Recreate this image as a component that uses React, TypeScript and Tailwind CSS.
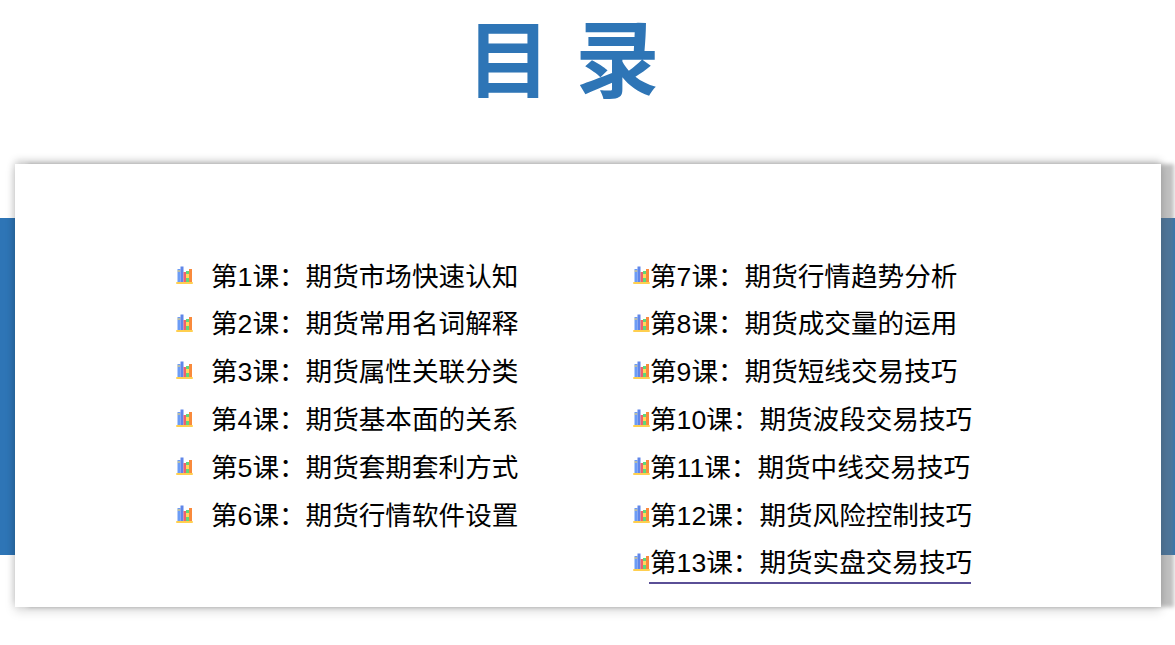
const FONT = "font-['Liberation_Sans','Noto_Sans_CJK_SC',sans-serif]";

const left = [
  ['第1课：', '期货市场快速认知'],
  ['第2课：', '期货常用名词解释'],
  ['第3课：', '期货属性关联分类'],
  ['第4课：', '期货基本面的关系'],
  ['第5课：', '期货套期套利方式'],
  ['第6课：', '期货行情软件设置'],
];

const right = [
  ['第7课：', '期货行情趋势分析'],
  ['第8课：', '期货成交量的运用'],
  ['第9课：', '期货短线交易技巧'],
  ['第10课：', '期货波段交易技巧'],
  ['第11课：', '期货中线交易技巧'],
  ['第12课：', '期货风险控制技巧'],
  ['第13课：', '期货实盘交易技巧'],
];

const BooksIcon = () => (
  <svg width="17" height="19" viewBox="0 0 17 19" className="-mt-[3px] shrink-0">
    <rect x="1.5" y="3" width="3" height="13" fill="#6c9cf5" />
    <rect x="1.5" y="4.5" width="3" height="1" fill="#ffd95c" />
    <rect x="4.5" y="0.5" width="3" height="15.5" fill="#5f86ea" />
    <rect x="7.5" y="6" width="2.5" height="10" fill="#f0616d" />
    <rect x="10" y="5" width="3" height="11" fill="#5fd97a" />
    <rect x="10" y="8" width="3" height="4" fill="#ffd95c" />
    <rect x="13" y="3" width="3" height="13" fill="#f98a3c" />
    <rect x="0" y="16" width="17" height="2" rx="1" fill="#ffcf4f" />
  </svg>
);

const Lesson = ({ no, name, gap, underline }: { no: string; name: string; gap: string; underline?: boolean }) => (
  <div className={`flex h-[47.8px] items-center ${gap}`}>
    <BooksIcon />
    <span className={`relative whitespace-nowrap text-[26.6px] leading-none text-black ${FONT}`}>
      {no.slice(0, -1)}
      <span className="inline-block w-[26.6px]">：</span>
      {name}
      {underline && <span className="absolute left-[-1px] right-[1px] top-[32px] h-[2px] bg-[#5a4f96]" />}
    </span>
  </div>
);

export default function App() {
  return (
    <div className="relative h-[645px] w-[1175px] overflow-hidden bg-white">
      <div className="absolute inset-x-0 top-[218px] h-[337px] bg-[#2e75b6]" />
      <h1 className={`relative flex h-[164px] justify-center pr-[24px] pt-[12px] text-[84px] font-bold leading-[100px] tracking-[25px] text-[#2e75b6] ${FONT}`}>
        目录
      </h1>
      <div className="relative ml-[15px] flex h-[443px] w-[1146px] gap-[116px] bg-white pl-[161px] pt-[89px] shadow-[13px_0_4px_rgba(117,117,117,0.46),0_-3px_8px_rgba(0,0,0,0.2),0_4px_10px_rgba(0,0,0,0.15)]">
        <div className="flex w-[341px] flex-col">
          {left.map(([no, name]) => (
            <Lesson key={no} no={no} name={name} gap="gap-[18px]" />
          ))}
        </div>
        <div className="flex flex-col">
          {right.map(([no, name], i) => (
            <Lesson key={no} no={no} name={name} gap="gap-0" underline={i === right.length - 1} />
          ))}
        </div>
      </div>
    </div>
  );
}
